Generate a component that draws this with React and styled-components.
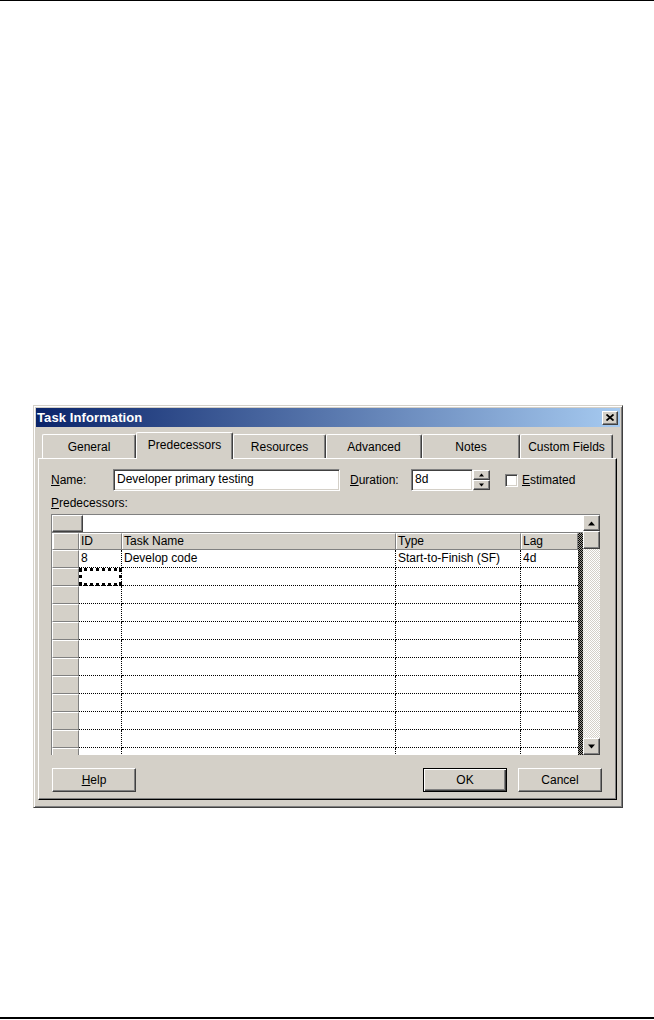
import React from 'react';
import styled, { createGlobalStyle } from 'styled-components';

const GlobalStyle = createGlobalStyle`
  html, body { margin: 0; padding: 0; background: #fff; }
  body {
    font-family: "Liberation Sans", Arial, sans-serif;
    font-size: 12px;
    color: #000;
  }
  * { box-sizing: border-box; }
`;

const Page = styled.div`
  width: 654px;
  height: 1019px;
  border-top: 1px solid #000;
  border-bottom: 2px solid #000;
  padding: 404px 0 0 33px;
`;

const Dialog = styled.div`
  width: 590px;
  background: #d4d0c8;
  border: 1px solid;
  border-color: #d4d0c8 #404040 #404040 #d4d0c8;
  box-shadow: inset 1px 1px 0 #fff, inset -1px -1px 0 #808080;
  padding: 2px 2px 7px;
`;

const TitleBar = styled.div`
  height: 19px;
  display: flex;
  align-items: center;
  justify-content: space-between;
  padding: 0 2px 0 1px;
  background: linear-gradient(to right, #0a246a, #a6caf0);
`;

const Title = styled.span`
  color: #fff;
  font-weight: bold;
  font-size: 13px;
  letter-spacing: 0.1px;
`;

const raised = `
  background: #d4d0c8;
  border: 1px solid;
  border-color: #fff #404040 #404040 #fff;
  box-shadow: inset -1px -1px 0 #808080;
`;

const sunken = `
  background: #fff;
  border: 1px solid;
  border-color: #808080 #fff #fff #808080;
  box-shadow: inset 1px 1px 0 #404040, inset -1px -1px 0 #d4d0c8;
`;

const CloseButton = styled.div`
  ${raised}
  width: 16px;
  height: 14px;
  display: flex;
  align-items: center;
  justify-content: center;
`;

const Body = styled.div`
  padding: 5px 2px 0;
`;

const TabRow = styled.div`
  display: flex;
  align-items: flex-end;
  height: 26px;
  padding-left: 4px;
`;

const Tab = styled.div`
  width: ${p => p.$w}px;
  height: ${p => (p.$active ? 27 : 24)}px;
  margin-bottom: ${p => (p.$active ? -1 : 0)}px;
  position: relative;
  z-index: ${p => (p.$active ? 2 : 1)};
  background: #d4d0c8;
  border-top: 1px solid #fff;
  border-left: 1px solid #fff;
  border-right: 1px solid #404040;
  border-radius: 2px 2px 0 0;
  box-shadow: inset -1px 0 0 #808080;
  display: flex;
  align-items: center;
  justify-content: center;
  padding-top: ${p => (p.$active ? 0 : 1)}px;
  padding-bottom: ${p => (p.$active ? 3 : 0)}px;
  white-space: nowrap;
`;

const Panel = styled.div`
  width: 579px;
  border-top: 1px solid #fff;
  border-left: 1px solid #fff;
  border-right: 1px solid #000;
  border-bottom: 1px solid #000;
  box-shadow: inset -1px -1px 0 #808080;
  padding: 10px 14px 7px 12px;
`;

const FieldRow = styled.div`
  display: flex;
  align-items: center;
  height: 22px;
`;

const Label = styled.label`
  width: ${p => p.$w}px;
  flex: none;
  white-space: nowrap;
`;

const TextBox = styled.div`
  ${sunken}
  width: ${p => p.$w}px;
  height: 22px;
  padding: 0 0 0 3px;
  line-height: 19px;
  white-space: nowrap;
  flex: none;
`;

const Spinner = styled.div`
  display: flex;
  flex-direction: column;
  width: 17px;
  height: 20px;
  flex: none;
`;

const SpinButton = styled.div`
  ${raised}
  flex: 1;
  display: flex;
  align-items: center;
  justify-content: center;
`;

const Check = styled.div`
  ${sunken}
  width: 13px;
  height: 13px;
  margin: 0 4px 0 15px;
  flex: none;
`;

const SectionLabel = styled.div`
  margin-top: 6px;
  line-height: 13px;
`;

const GridFrame = styled.div`
  margin-top: 4px;
  width: 549px;
  height: 241px;
  border-top: 1px solid #808080;
  border-left: 1px solid #808080;
  display: flex;
`;

const GridMain = styled.div`
  width: 531px;
  display: flex;
  flex-direction: column;
`;

const EntryRow = styled.div`
  height: 18px;
  display: flex;
  border-bottom: 1px solid #808080;
  background: #fff;
`;

const EntryCorner = styled.div`
  ${raised}
  width: 31px;
  height: 17px;
`;

const GridBody = styled.div`
  flex: 1;
  display: flex;
  overflow: hidden;
`;

const Table = styled.div`
  width: 526px;
  display: grid;
  grid-template-columns: 27px 43px 274px 125px 57px;
  grid-template-rows: 17px;
  grid-auto-rows: 18px;
  background: #fff;
  overflow: hidden;
`;

const HeadCell = styled.div`
  background: #d4d0c8;
  border-top: 1px solid #fff;
  border-left: ${p => (p.$corner ? 1 : 0)}px solid #fff;
  border-right: 1px solid #808080;
  border-bottom: 1px solid #808080;
  padding-left: 2px;
  line-height: 15px;
  white-space: nowrap;
  box-shadow: inset 1px 0 0 #fff;
`;

const RowHead = styled.div`
  background: #d4d0c8;
  border-top: 1px solid #fff;
  border-left: 1px solid #fff;
  border-right: 1px solid #808080;
  border-bottom: 1px solid #808080;
`;

const Cell = styled.div`
  border-right: ${p => (p.$last ? 0 : 1)}px dotted #000;
  border-bottom: 1px dotted #000;
  padding-left: 2px;
  line-height: 17px;
  white-space: nowrap;
  overflow: hidden;
  outline: ${p => (p.$focus ? '3px dotted #000' : 'none')};
  outline-offset: -3px;
`;

const Splitter = styled.div`
  width: 5px;
  background: repeating-conic-gradient(#000 0 25%, #9a9890 0 50%) 0 0 / 2px 2px;
`;

const ScrollBar = styled.div`
  width: 17px;
  display: flex;
  flex-direction: column;
`;

const ScrollButton = styled.div`
  ${raised}
  height: ${p => p.$h}px;
  flex: none;
  display: flex;
  align-items: center;
  justify-content: center;
`;

const ScrollTrack = styled.div`
  flex: 1;
  background: repeating-conic-gradient(#fff 0 25%, #d4d0c8 0 50%) 0 0 / 2px 2px;
`;

const ButtonRow = styled.div`
  display: flex;
  margin-top: 13px;
  padding-left: 1px;
  gap: 11px;
`;

const Spacer = styled.div`
  flex: 1;
`;

const Button = styled.div`
  ${raised}
  width: 84px;
  height: 24px;
  display: flex;
  align-items: center;
  justify-content: center;
  ${p => p.$default && `
    border-color: #000;
    box-shadow: inset 1px 1px 0 #fff, inset -1px -1px 0 #404040, inset -2px -2px 0 #808080;
  `}
`;

const Arrow = ({ dir, size = 7 }) => (
  <svg width={size} height={Math.ceil(size / 2) + 1} viewBox="0 0 7 4">
    {dir === 'up'
      ? <path d="M3.5 0 L7 4 L0 4 Z" fill="#000" />
      : <path d="M0 0 L7 0 L3.5 4 Z" fill="#000" />}
  </svg>
);

const tabs = [
  { label: 'General', w: 94 },
  { label: 'Predecessors', w: 97, active: true },
  { label: 'Resources', w: 93 },
  { label: 'Advanced', w: 96 },
  { label: 'Notes', w: 98 },
  { label: 'Custom Fields', w: 93 },
];

const rows = [
  { id: '8', name: 'Develop code', type: 'Start-to-Finish (SF)', lag: '4d' },
  ...Array.from({ length: 11 }, () => ({ id: '', name: '', type: '', lag: '' })),
];

export default function App() {
  return (
    <>
      <GlobalStyle />
      <Page>
        <Dialog>
          <TitleBar>
            <Title>Task Information</Title>
            <CloseButton>
              <svg width="8" height="7" viewBox="0 0 8 7">
                <path d="M0.5 0.5 L7.5 6.5 M7.5 0.5 L0.5 6.5" stroke="#000" strokeWidth="1.8" />
              </svg>
            </CloseButton>
          </TitleBar>
          <Body>
            <TabRow>
              {tabs.map(t => (
                <Tab key={t.label} $w={t.w} $active={t.active}>{t.label}</Tab>
              ))}
            </TabRow>
            <Panel>
              <FieldRow>
                <Label $w={62}><u>N</u>ame:</Label>
                <TextBox $w={227}>Developer primary testing</TextBox>
                <Label $w={61} style={{ marginLeft: 10 }}><u>D</u>uration:</Label>
                <TextBox $w={62}>8d</TextBox>
                <Spinner>
                  <SpinButton><Arrow dir="up" size={5} /></SpinButton>
                  <SpinButton><Arrow dir="down" size={5} /></SpinButton>
                </Spinner>
                <Check />
                <Label $w={60}><u>E</u>stimated</Label>
              </FieldRow>
              <SectionLabel><u>P</u>redecessors:</SectionLabel>
              <GridFrame>
                <GridMain>
                  <EntryRow>
                    <EntryCorner />
                  </EntryRow>
                  <GridBody>
                    <Table>
                      <HeadCell $corner />
                      <HeadCell>ID</HeadCell>
                      <HeadCell>Task Name</HeadCell>
                      <HeadCell>Type</HeadCell>
                      <HeadCell>Lag</HeadCell>
                      {rows.map((r, i) => (
                        <React.Fragment key={i}>
                          <RowHead />
                          <Cell $focus={i === 1}>{r.id}</Cell>
                          <Cell>{r.name}</Cell>
                          <Cell>{r.type}</Cell>
                          <Cell $last>{r.lag}</Cell>
                        </React.Fragment>
                      ))}
                    </Table>
                    <Splitter />
                  </GridBody>
                </GridMain>
                <ScrollBar>
                  <ScrollButton $h={16}><Arrow dir="up" /></ScrollButton>
                  <ScrollButton $h={18} />
                  <ScrollTrack />
                  <ScrollButton $h={17}><Arrow dir="down" /></ScrollButton>
                </ScrollBar>
              </GridFrame>
              <ButtonRow>
                <Button><span><u>H</u>elp</span></Button>
                <Spacer />
                <Button $default>OK</Button>
                <Button>Cancel</Button>
              </ButtonRow>
            </Panel>
          </Body>
        </Dialog>
      </Page>
    </>
  );
}
